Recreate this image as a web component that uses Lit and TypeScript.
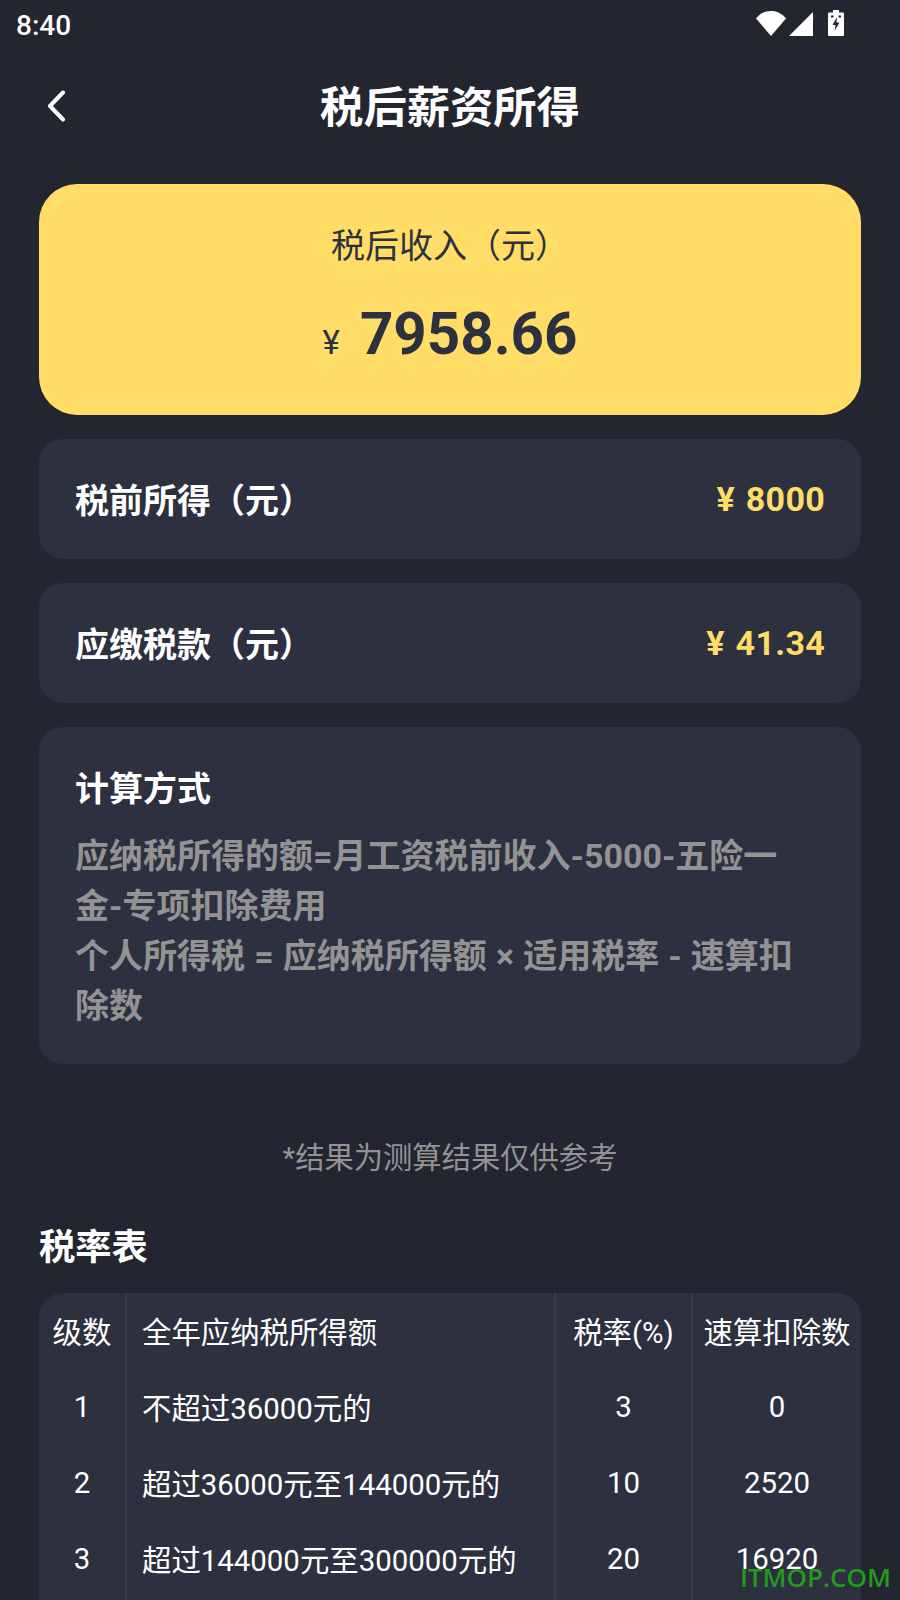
import { html, css, LitElement } from "lit";
import { customElement } from "lit/decorators.js";

const TAX_ROWS = [
  ["1", "不超过36000元的", "3", "0"],
  ["2", "超过36000元至144000元的", "10", "2520"],
  ["3", "超过144000元至300000元的", "20", "16920"],
  ["4", "超过300000元至420000元的", "25", "31920"],
];

@customElement("app-root")
export class AppRoot extends LitElement {
  override render() {
    return html`
      <div class="status">
        <span class="time">8:40</span>
        <div class="status-icons">
          <svg width="30" height="25" viewBox="0 0 30 25"><path d="M0 7.500C4 2.500 9 0 15 0s11 2.500 15 7.500L15 25z" fill="#fff"/></svg>
          <svg width="24" height="24" viewBox="0 0 24 24"><path d="M24 0v24H0z" fill="#fff"/></svg>
          <svg class="battery" width="16" height="26" viewBox="0 0 16 26">
            <path d="M5 0h6v2.500h4a1 1 0 0 1 1 1V25a1 1 0 0 1-1 1H1a1 1 0 0 1-1-1V3.500a1 1 0 0 1 1-1h4z" fill="#fff"/>
            <path d="M9 7 4.500 15H7.500L6.500 21 11.500 12.500H8.500z" fill="#232530"/>
            <path d="M3 5.500h2.500v2H3zM10.500 5.500H13v2h-2.500z" fill="#232530"/>
          </svg>
        </div>
      </div>

      <header class="nav">
        <svg class="back" width="20" height="32" viewBox="0 0 20 32"><path d="M17 2.500 4 16l13 13.500" fill="none" stroke="#fff" stroke-width="4" stroke-linecap="round" stroke-linejoin="round"/></svg>
        <h1>税后薪资所得</h1>
      </header>

      <main class="content">
        <section class="hero">
          <div class="hero-label">税后收入（元）</div>
          <div class="hero-amount"><span class="yen">¥</span><span class="amount">7958.66</span></div>
        </section>

        <section class="row"><span class="row-label">税前所得（元）</span><span class="row-value">¥ 8000</span></section>
        <section class="row"><span class="row-label">应缴税款（元）</span><span class="row-value">¥ 41.34</span></section>

        <section class="method">
          <h2>计算方式</h2>
          <p>应纳税所得的额=月工资税前收入-5000-五险一金-专项扣除费用<br />个人所得税 = 应纳税所得额 × 适用税率 - 速算扣除数</p>
        </section>

        <div class="note">*结果为测算结果仅供参考</div>

        <h3>税率表</h3>
        <div class="table">
          <div class="cell head">级数</div>
          <div class="cell left">全年应纳税所得额</div>
          <div class="cell head">税率(%)</div>
          <div class="cell head last">速算扣除数</div>
          ${TAX_ROWS.map(
            (r) => html`
              <div class="cell">${r[0]}</div>
              <div class="cell left">${r[1]}</div>
              <div class="cell">${r[2]}</div>
              <div class="cell last">${r[3]}</div>
            `
          )}
        </div>
      </main>

      <div class="watermark">ITMOP.COM</div>
    `;
  }

  static styles = css`
    :host {
      display: block;
      position: relative;
      width: 900px;
      height: 1600px;
      overflow: hidden;
      background: #232530;
      color: #fff;
      font-family: Roboto, "Noto Sans CJK SC", sans-serif;
    }

    .status {
      height: 50px;
      display: flex;
      align-items: center;
      justify-content: space-between;
      padding: 0 56px 0 16px;
    }

    .time {
      font-size: 28px;
      font-weight: 500;
    }

    .status-icons {
      display: flex;
      align-items: flex-end;
      gap: 3px;
      margin-bottom: 4px;
    }

    .battery {
      margin-left: 12px;
    }

    .nav {
      position: relative;
      height: 114px;
      display: flex;
      align-items: center;
      justify-content: center;
    }

    .back {
      position: absolute;
      left: 46px;
      top: 40px;
    }

    h1 {
      margin: -6px 0 0;
      font-size: 43.3px;
      font-weight: 700;
    }

    .content {
      padding: 20px 39px 0;
      display: flex;
      flex-direction: column;
    }

    .hero {
      height: 231px;
      box-sizing: border-box;
      padding-top: 38px;
      border-radius: 38px;
      background: #ffdd66;
      color: #2d303f;
      text-align: center;
      margin-bottom: 24px;
    }

    .hero-label {
      font-size: 34px;
      line-height: 48px;
    }

    .hero-amount {
      margin-top: 29px;
      display: flex;
      align-items: baseline;
      justify-content: center;
      line-height: 70px;
    }

    .yen {
      font-size: 33px;
      margin-right: 20px;
    }

    .amount {
      font-size: 58.3px;
      font-weight: 700;
    }

    .row {
      height: 120px;
      box-sizing: border-box;
      padding: 0 36px;
      margin-bottom: 24px;
      border-radius: 24px;
      background: #2d303f;
      display: flex;
      align-items: center;
      justify-content: space-between;
    }

    .row-label {
      font-size: 34px;
      font-weight: 700;
      padding-bottom: 2px;
    }

    .row-value {
      font-size: 34px;
      font-weight: 700;
      letter-spacing: 0.3px;
      word-spacing: 2px;
      color: #ffdd66;
    }

    .method {
      height: 337px;
      box-sizing: border-box;
      padding: 37px 38px 0 36px;
      border-radius: 24px;
      background: #2d303f;
    }

    h2 {
      margin: 0;
      font-size: 34px;
      font-weight: 700;
      line-height: 50px;
    }

    .method p {
      margin: 17px 0 0;
      font-size: 34px;
      font-weight: 700;
      line-height: 50px;
      word-spacing: 0.7px;
      color: #939393;
    }

    .note {
      margin-top: 73px;
      font-size: 29.3px;
      line-height: 42px;
      text-align: center;
      color: #939393;
    }

    h3 {
      margin: 43px 0 0;
      font-size: 36.3px;
      font-weight: 700;
      line-height: 52px;
    }

    .table {
      margin-top: 19px;
      display: grid;
      grid-template-columns: 88px 429px 137px 168px;
      grid-auto-rows: 76px;
      border-radius: 24px 24px 0 0;
      background: #2d303f;
    }

    .cell {
      display: flex;
      align-items: center;
      justify-content: center;
      font-size: 29.4px;
      white-space: nowrap;
      border-right: 2px solid #383c4c;
    }

    .cell.head {
      padding-bottom: 3px;
    }

    .cell.left {
      justify-content: flex-start;
      padding: 0 0 3px 15px;
    }

    .cell.last {
      border-right: none;
    }

    .watermark {
      position: absolute;
      right: 9px;
      bottom: 5px;
      font-family: "Open Sans", sans-serif;
      font-size: 26px;
      font-weight: 600;
      color: #229a1a;
    }
  `;
}
